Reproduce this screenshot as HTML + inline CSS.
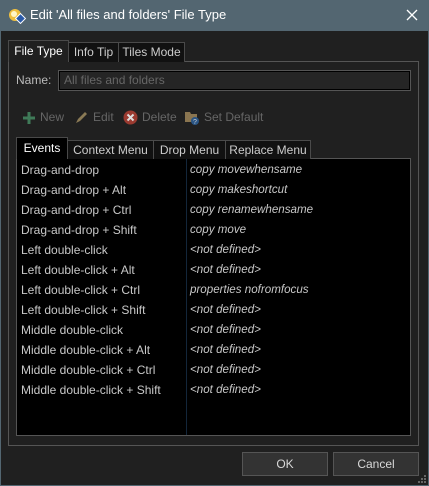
<!DOCTYPE html>
<html><head><meta charset="utf-8"><style>
*{margin:0;padding:0;box-sizing:border-box}
body{width:429px;height:486px;background:#536671;font-family:"Segoe UI","Liberation Sans",sans-serif;font-size:12px;color:#d0d0d0;position:relative;overflow:hidden}
.a{position:absolute}
#win{left:1px;top:31px;width:427px;height:454px;background:#202020}
#title{left:30px;top:7px;color:#fff;font-size:13px}
.tab{position:absolute;border:1px solid #4a4a4a;border-bottom:none;background:#111;color:#ccc;font-size:12px;text-align:center;line-height:18px}
.tab.sel{background:#202020;color:#fff}
#panel{left:8px;top:61px;width:411px;height:385px;border:1px solid #555}
#name{left:58px;top:70px;width:353px;height:21px;border:1px solid #555;background:#252525;box-shadow:inset 0 0 0 1px #000;color:#666;padding-left:5px;line-height:19px}
.tb{position:absolute;top:110px;color:#666;font-size:12px}
#list{left:16px;top:158px;width:395px;height:278px;border:1px solid #555;background:#000}
#div{left:186px;top:159px;width:1px;height:276px;background:#13263a}
.r{position:absolute;left:21px;color:#c8c8c8;font-size:12px}
.v{position:absolute;left:190px;color:#c8c8c8;font-size:11.6px;font-style:italic}
.btn{position:absolute;top:452px;width:86px;height:24px;border:1px solid #555;background:#333;color:#d8d8d8;text-align:center;line-height:22px}
</style></head><body>
<div class="a" id="win"></div>
<svg class="a" style="left:8px;top:8px" width="18" height="16" viewBox="0 0 18 16"><circle cx="7" cy="7" r="6" fill="#f0c040"/><circle cx="6" cy="6" r="3" fill="#fff6c8"/><rect x="9" y="7" width="7" height="7" transform="rotate(45 12.5 10.5)" fill="#2a5aa8" stroke="#fff"/></svg>
<div class="a" id="title">Edit 'All files and folders' File Type</div>
<svg class="a" style="left:406px;top:9px" width="12" height="12"><path d="M1 1L11 11M11 1L1 11" stroke="#fff" stroke-width="1.3"/></svg>
<div class="a" id="panel"></div>
<div class="tab sel" style="left:8px;top:40px;width:61px;height:22px;line-height:20px">File Type</div>
<div class="tab" style="left:68px;top:42px;width:51px;height:20px">Info Tip</div>
<div class="tab" style="left:118px;top:42px;width:67px;height:20px">Tiles Mode</div>
<div class="a" style="left:16px;top:73px;color:#bbb">Name:</div>
<div class="a" id="name">All files and folders</div>
<svg class="a" style="left:22px;top:111px" width="14" height="14"><path d="M7 1V13M1 7H13" stroke="#3f7a58" stroke-width="3"/></svg>
<div class="tb" style="left:40px">New</div>
<svg class="a" style="left:74px;top:110px" width="15" height="15"><path d="M2 13L4 9L11 2L13 4L6 11Z" fill="#8a7a55"/></svg>
<div class="tb" style="left:93px">Edit</div>
<svg class="a" style="left:123px;top:110px" width="15" height="15"><circle cx="7.5" cy="7.5" r="7" fill="#9a3a30"/><path d="M4.5 4.5L10.5 10.5M10.5 4.5L4.5 10.5" stroke="#ddd" stroke-width="2"/></svg>
<div class="tb" style="left:142px">Delete</div>
<svg class="a" style="left:184px;top:109px" width="16" height="16"><path d="M1 3H6L7 5H13V13H1Z" fill="#8a7550"/><circle cx="11" cy="12" r="4" fill="#2a5585"/><text x="9" y="15" font-size="7" fill="#ccc" font-family="Liberation Sans">?</text></svg>
<div class="tb" style="left:204px">Set Default</div>
<div class="a" id="list"></div>
<div class="tab sel" style="left:16px;top:137px;width:52px;height:22px;line-height:20px;background:#000">Events</div>
<div class="tab" style="left:67px;top:140px;width:87px;height:19px">Context Menu</div>
<div class="tab" style="left:153px;top:140px;width:73px;height:19px">Drop Menu</div>
<div class="tab" style="left:225px;top:140px;width:86px;height:19px">Replace Menu</div>
<div class="a" id="div"></div>
<div class="r" style="top:163px">Drag-and-drop</div><div class="v" style="top:163px">copy movewhensame</div>
<div class="r" style="top:183px">Drag-and-drop + Alt</div><div class="v" style="top:183px">copy makeshortcut</div>
<div class="r" style="top:203px">Drag-and-drop + Ctrl</div><div class="v" style="top:203px">copy renamewhensame</div>
<div class="r" style="top:223px">Drag-and-drop + Shift</div><div class="v" style="top:223px">copy move</div>
<div class="r" style="top:243px">Left double-click</div><div class="v" style="top:243px">&lt;not defined&gt;</div>
<div class="r" style="top:263px">Left double-click + Alt</div><div class="v" style="top:263px">&lt;not defined&gt;</div>
<div class="r" style="top:283px">Left double-click + Ctrl</div><div class="v" style="top:283px">properties nofromfocus</div>
<div class="r" style="top:303px">Left double-click + Shift</div><div class="v" style="top:303px">&lt;not defined&gt;</div>
<div class="r" style="top:323px">Middle double-click</div><div class="v" style="top:323px">&lt;not defined&gt;</div>
<div class="r" style="top:343px">Middle double-click + Alt</div><div class="v" style="top:343px">&lt;not defined&gt;</div>
<div class="r" style="top:363px">Middle double-click + Ctrl</div><div class="v" style="top:363px">&lt;not defined&gt;</div>
<div class="r" style="top:383px">Middle double-click + Shift</div><div class="v" style="top:383px">&lt;not defined&gt;</div>
<div class="btn" style="left:242px">OK</div>
<div class="btn" style="left:333px">Cancel</div>
<svg class="a" style="left:418px;top:475px" width="8" height="8"><rect x="6" y="0" width="2" height="2" fill="#666"/><rect x="3" y="3" width="2" height="2" fill="#666"/><rect x="6" y="3" width="2" height="2" fill="#666"/><rect x="0" y="6" width="2" height="2" fill="#666"/><rect x="3" y="6" width="2" height="2" fill="#666"/><rect x="6" y="6" width="2" height="2" fill="#666"/></svg>
</body></html>
